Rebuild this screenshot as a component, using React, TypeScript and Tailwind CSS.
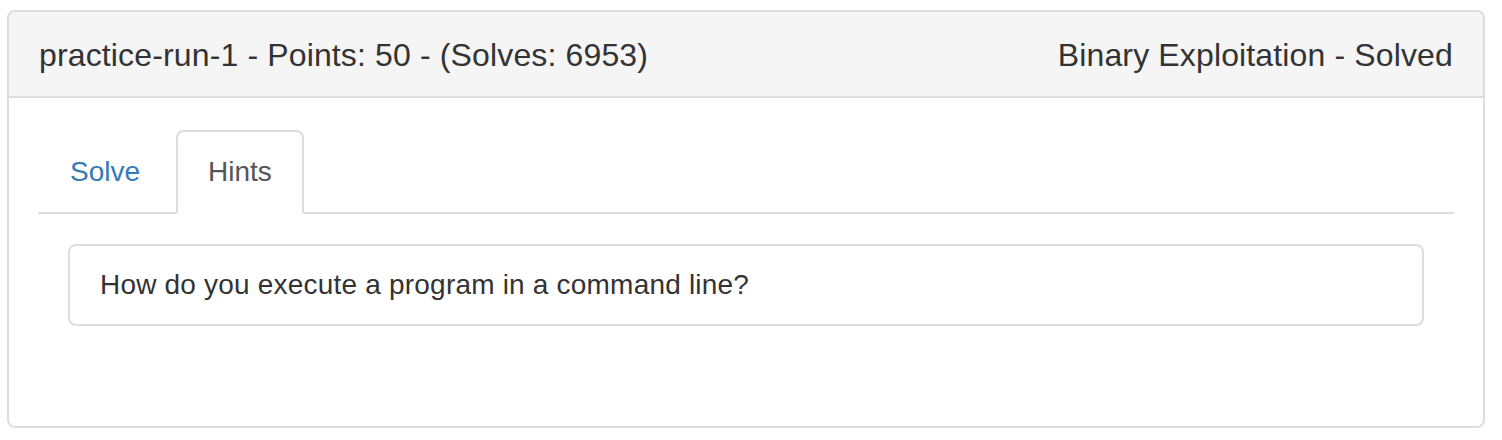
const App = () => {
  return (
    <div className="min-h-[440px] bg-white pt-[10px] pl-[7px] font-['Liberation_Sans',Arial,sans-serif] text-[#333]">
      <div className="w-[1478px] h-[418px] rounded-[8px] border-2 border-[#ddd] overflow-hidden">
        <div className="h-[86px] flex items-center justify-between px-[30px] bg-[#f5f5f5] border-b-2 border-[#ddd] text-[32px] tracking-[0.14px] pt-[2px]">
          <span>practice-run-1 - Points: 50 - (Solves: 6953)</span>
          <span>Binary Exploitation - Solved</span>
        </div>

        <div className="pt-[32px] px-[29px]">
          <div className="flex border-b-2 border-[#ddd] text-[28px] leading-[40px]">
            <a href="#" className="mr-[4px] -mb-[2px] px-[30px] py-[20px] border-2 border-transparent text-[#337ab7]">
              Solve
            </a>
            <a href="#" className="-mb-[2px] px-[30px] py-[20px] border-2 border-[#ddd] border-b-transparent rounded-t-[8px] bg-white text-[#555]">
              Hints
            </a>
          </div>

          <div className="px-[30px] pt-[30px]">
            <div className="h-[82px] flex items-center px-[30px] rounded-[8px] border-2 border-[#ddd] text-[28px] tracking-[0.2px]">
              How do you execute a program in a command line?
            </div>
          </div>
        </div>
      </div>
    </div>
  );
};

export default App;
